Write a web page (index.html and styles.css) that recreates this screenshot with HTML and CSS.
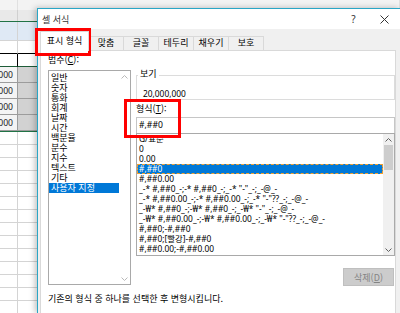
FILE: index.html
```html
<!DOCTYPE html>
<html lang="ko">
<head>
    <meta charset="UTF-8">
    <meta name="viewport" content="width=device-width, initial-scale=1.0">
    <title>셀 서식</title>
    <link rel="stylesheet" href="styles.css">
</head>
<body>
    <div class="sheet">
        <div class="srow sheet-top"><span></span><span></span></div>
        <div class="srow sheet-head"><span></span><span></span></div>
        <div class="srow sel"><span></span><span></span></div>
        <div class="srow blank"><span></span><span></span></div>
        <div class="srow boxed"><span></span><span></span></div>
        <div class="nums">
            <div class="srow num"><span>20,000,000</span><span></span></div>
            <div class="srow num"><span>20,000,000</span><span></span></div>
            <div class="srow num"><span>20,000,000</span><span></span></div>
            <div class="srow num"><span>20,000,000</span><span></span></div>
        </div>
        <div class="srow empty"><span></span><span></span></div>
        <div class="srow empty"><span></span><span></span></div>
        <div class="srow empty"><span></span><span></span></div>
        <div class="srow empty"><span></span><span></span></div>
        <div class="srow empty"><span></span><span></span></div>
        <div class="srow empty"><span></span><span></span></div>
        <div class="srow empty"><span></span><span></span></div>
        <div class="srow empty"><span></span><span></span></div>
        <div class="srow empty"><span></span><span></span></div>
        <div class="srow empty"><span></span><span></span></div>
        <div class="srow empty"><span></span><span></span></div>
        <div class="srow empty"><span></span><span></span></div>
        <div class="srow empty"><span></span><span></span></div>
        <div class="srow empty"><span></span><span></span></div>
    </div>

    <div class="dialog">
        <div class="titlebar">
            <span class="title">셀 서식</span>
            <span class="tb-btn">?</span>
            <span class="tb-btn">
                <svg width="9" height="9" viewBox="0 0 9 9"><path d="M0.5 0.5L8.5 8.5M8.5 0.5L0.5 8.5" stroke="#333" stroke-width="1"/></svg>
            </span>
        </div>

        <div class="tabs">
            <span class="tab active">표시 형식</span>
            <span class="tab">맞춤</span>
            <span class="tab">글꼴</span>
            <span class="tab">테두리</span>
            <span class="tab">채우기</span>
            <span class="tab">보호</span>
        </div>

        <div class="page">
            <div class="cols">
                <div class="left">
                    <div class="label">범주(<u>C</u>):</div>
                    <div class="listbox cat">
                        <ul class="items">
                            <li>일반</li>
                            <li>숫자</li>
                            <li>통화</li>
                            <li>회계</li>
                            <li>날짜</li>
                            <li>시간</li>
                            <li>백분율</li>
                            <li>분수</li>
                            <li>지수</li>
                            <li>텍스트</li>
                            <li>기타</li>
                            <li class="picked">사용자 지정</li>
                        </ul>
                        <div class="vscroll off">
                            <span class="arrow"><svg width="7" height="4" viewBox="0 0 7 4"><path d="M0.5 3.5L3.5 0.5L6.5 3.5" fill="none" stroke="#b8b8b8"/></svg></span>
                            <span class="track"></span>
                            <span class="arrow"><svg width="7" height="4" viewBox="0 0 7 4"><path d="M0.5 0.5L3.5 3.5L6.5 0.5" fill="none" stroke="#b8b8b8"/></svg></span>
                        </div>
                    </div>
                </div>

                <div class="right">
                    <div class="preview">
                        <span class="legend">보기</span>
                        <div class="sample">20,000,000</div>
                    </div>
                    <div class="label fmt-label">형식(<u>T</u>):</div>
                    <div class="fmt-input">#,##0</div>
                    <div class="listbox fmt">
                        <ul class="items">
                            <li class="cut">G/표준</li>
                            <li>0</li>
                            <li>0.00</li>
                            <li class="picked focus">#,##0</li>
                            <li>#,##0.00</li>
                            <li>_-* #,##0_-;-* #,##0_-;_-* "-"_-;_-@_-</li>
                            <li>_-* #,##0.00_-;-* #,##0.00_-;_-* "-"??_-;_-@_-</li>
                            <li>_-₩* #,##0_-;-₩* #,##0_-;_-₩* "-"_-;_-@_-</li>
                            <li>_-₩* #,##0.00_-;-₩* #,##0.00_-;_-₩* "-"??_-;_-@_-</li>
                            <li>#,##0;-#,##0</li>
                            <li>#,##0;[빨강]-#,##0</li>
                            <li>#,##0.00;-#,##0.00</li>
                        </ul>
                        <div class="vscroll">
                            <span class="arrow"><svg width="7" height="4" viewBox="0 0 7 4"><path d="M0.5 3.5L3.5 0.5L6.5 3.5" fill="none" stroke="#606060"/></svg></span>
                            <span class="track"><span class="thumb"></span></span>
                            <span class="arrow"><svg width="7" height="4" viewBox="0 0 7 4"><path d="M0.5 0.5L3.5 3.5L6.5 0.5" fill="none" stroke="#606060"/></svg></span>
                        </div>
                    </div>
                    <div class="actions">
                        <button class="btn-del" disabled>삭제(<u>D</u>)</button>
                    </div>
                </div>
            </div>
            <p class="hint">기존의 형식 중 하나를 선택한 후 변형시킵니다.</p>
        </div>
    </div>

    <div class="mark mark-tab"></div>
    <div class="mark mark-fmt"></div>
</body>
</html>
```

FILE: styles.css
```css
* {
    box-sizing: border-box;
}
body {
    margin: 0;
    width: 400px;
    height: 313px;
    overflow: hidden;
    position: relative;
    background: #fff;
    font-family: "Noto Sans CJK KR", "Noto Sans", sans-serif;
    font-size: 9px;
    color: #000;
}
ul {
    margin: 0;
    padding: 0;
    list-style: none;
}

/* spreadsheet behind the dialog */
.sheet {
    display: flex;
    flex-direction: column;
}
.srow {
    display: grid;
    grid-template-columns: 18px 1fr;
}
.srow span {
    border-right: 1px solid #d4d4d4;
    border-bottom: 1px solid #d4d4d4;
}
.sheet-top {
    height: 10px;
    background: #f3f3f3;
}
.sheet-top span {
    border-bottom: none;
    border-right-color: #e0e0e0;
}
.sheet-head {
    height: 12px;
    background: #e9e9e9;
    border-bottom: 1px solid #217346;
}
.sheet-head span {
    border-bottom: none;
    border-right-color: #d0d0d0;
}
.sel {
    height: 19px;
    background: #dfe9f5;
}
.blank {
    height: 13px;
}
.blank span {
    border-bottom-color: #000;
}
.boxed {
    height: 13px;
}
.boxed span:first-child {
    border-right-color: #000;
}
.boxed span {
    border-bottom-color: #1e5c38;
}
.nums {
    border-bottom: 1px solid #217346;
}
.num {
    height: 16px;
}
.num span {
    border-color: #9c9c9c;
    background: #d2d2d2;
}
.num span:first-child {
    background: #f4f4f4;
    display: flex;
    justify-content: flex-end;
    align-items: center;
    overflow: hidden;
    white-space: nowrap;
    padding-right: 4px;
    font-family: "Noto Sans", sans-serif;
    font-size: 8.6px;
    color: #222;
}
.empty {
    height: 13px;
}

/* dialog */
.dialog {
    position: absolute;
    left: 37px;
    top: 8px;
    width: 363px;
    height: 305px;
    background: #f0f0f0;
    border-top: 1px solid #2aa6c6;
    border-left: 1px solid #2aa6c6;
    box-shadow: -2px 0 6px rgba(0, 0, 0, 0.25);
    display: flex;
    flex-direction: column;
}
.titlebar {
    height: 20px;
    background: #fff;
    display: flex;
    align-items: center;
    padding-left: 4px;
}
.title {
    flex: 1;
    font-size: 9px;
    color: #333;
}
.tb-btn {
    width: 31px;
    font-family: "Noto Sans", sans-serif;
    font-size: 10px;
    color: #333;
    display: flex;
    justify-content: center;
}
.tabs {
    height: 21px;
    display: flex;
    align-items: flex-end;
    padding-left: 2px;
}
.tab {
    width: 36px;
    height: 14px;
    line-height: 12px;
    text-align: center;
    background: #f0f0f0;
    border: 1px solid #d9d9d9;
    border-bottom: none;
    margin-left: -1px;
}
.tab.active {
    width: 49px;
    height: 20px;
    line-height: 18px;
    background: #fff;
    margin-left: 0;
    margin-bottom: -1px;
    position: relative;
    z-index: 1;
}
.page {
    flex: 1;
    margin: 0 4px 0 2px;
    background: #fff;
    border: 1px solid #d9d9d9;
    border-bottom: none;
    padding-left: 7px;
}
.cols {
    display: flex;
    gap: 5px;
}
.left {
    width: 83px;
}
.right {
    width: 259px;
}
.label {
    height: 10px;
    line-height: 10px;
    margin-top: 4px;
}

/* list boxes */
.listbox {
    display: flex;
    background: #fff;
    border: 1px solid #a9a9a9;
    overflow: hidden;
}
.listbox .items {
    flex: 1;
    min-width: 0;
}
.listbox li {
    height: 10px;
    line-height: 10px;
    white-space: nowrap;
    overflow: hidden;
}
.cat {
    margin-top: 5px;
    height: 215px;
}
.cat .items {
    padding-top: 2px;
}
.cat li {
    padding-left: 2px;
}
.fmt {
    height: 123px;
}
.fmt .items {
    font-family: "Noto Sans", "Noto Sans CJK KR", sans-serif;
    font-size: 8.4px;
}
.fmt li {
    padding-left: 2px;
}
.fmt li.cut {
    clip-path: inset(3px 0 0 0);
}
.picked {
    background: #0078d7;
    color: #fff;
}
.focus {
    outline: 1px dashed #f0a030;
    outline-offset: -1px;
}
.vscroll {
    width: 11px;
    display: flex;
    flex-direction: column;
    background: #f0f0f0;
}
.vscroll.off {
    background: #fff;
}
.arrow {
    height: 11px;
    display: flex;
    align-items: center;
    justify-content: center;
}
.track {
    flex: 1;
}
.thumb {
    display: block;
    height: 25px;
    margin: 0 1px;
    background: #cdcdcd;
}

/* right column */
.preview {
    margin-top: 24px;
    height: 25px;
    border: 1px solid #dcdcdc;
    padding-left: 1px;
    line-height: 10px;
}
.legend {
    display: inline-block;
    margin-top: -7px;
    padding: 0 2px;
    height: 10px;
    line-height: 10px;
    background: #fff;
    vertical-align: top;
}
.sample {
    margin-top: 3px;
    padding-left: 5px;
    line-height: 9px;
    font-family: "Noto Sans", sans-serif;
    font-size: 8.4px;
}
.fmt-input {
    margin-top: 3px;
    height: 16px;
    line-height: 14px;
    border: 1px solid #c6c6c6;
    border-bottom: none;
    padding-left: 2px;
    font-family: "Noto Sans", sans-serif;
    font-size: 8.6px;
}
.actions {
    display: flex;
    justify-content: flex-end;
    padding-right: 1px;
    margin-top: 12px;
}
.btn-del {
    width: 51px;
    height: 18px;
    padding: 0;
    background: #cccccc;
    border: 1px solid #bfbfbf;
    color: #838383;
    font-family: inherit;
    font-size: 9px;
}
.hint {
    margin: 8px 0 0 0;
    line-height: 10px;
}

/* red highlight boxes drawn over the screenshot */
.mark {
    position: absolute;
    border: 3px solid #f00;
}
.mark-tab {
    left: 35px;
    top: 28px;
    width: 56px;
    height: 28px;
}
.mark-fmt {
    left: 124px;
    top: 99px;
    width: 57px;
    height: 39px;
}
```
